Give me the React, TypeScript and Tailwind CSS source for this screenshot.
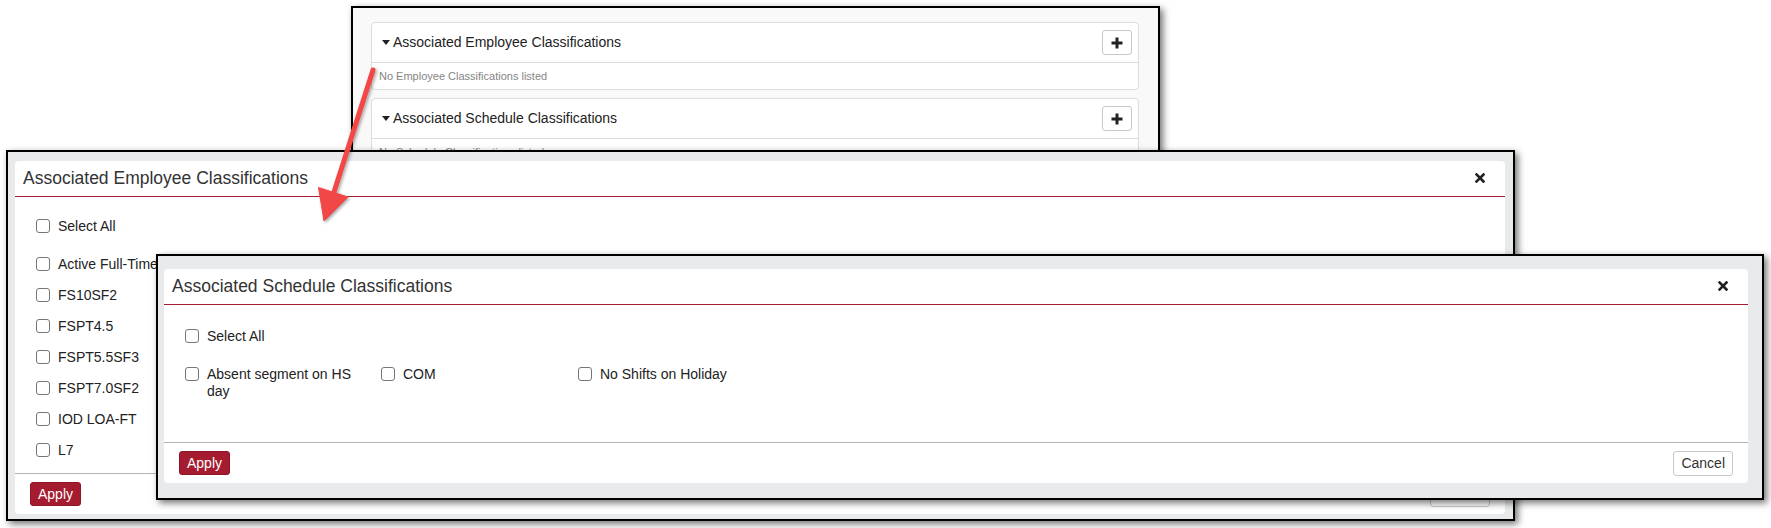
import { ReactNode } from "react";

const Checkbox = () => (
  <span className="mt-[1px] inline-block size-[14px] shrink-0 rounded-[3px] border border-[#767676] bg-white" />
);

const CloseIcon = () => (
  <svg width="10" height="10" viewBox="0 0 10 10" className="text-[#222]">
    <path d="M1.5 1.5 L8.5 8.5 M8.5 1.5 L1.5 8.5" stroke="currentColor" strokeWidth="2.6" strokeLinecap="square" />
  </svg>
);

const PlusIcon = () => (
  <svg width="12" height="12" viewBox="0 0 12 12" className="text-[#222]">
    <path d="M6 0.5 V11.5 M0.5 6 H11.5" stroke="currentColor" strokeWidth="3" />
  </svg>
);

const Caret = () => (
  <svg width="8" height="5" viewBox="0 0 8 5" className="mr-[3px] text-[#222]">
    <path d="M0 0 H8 L4 5 Z" fill="currentColor" />
  </svg>
);

const ApplyButton = () => (
  <button className="h-[24px] rounded-[3px] border border-[#8c1528] bg-[#a51c30] px-[7px] text-[14px] leading-none text-white">
    Apply
  </button>
);

const CancelButton = () => (
  <button className="h-[25px] rounded-[3px] border border-[#c8c8c8] bg-white px-[7px] text-[14px] leading-none text-[#333]">
    Cancel
  </button>
);

interface PanelProps {
  title: string;
  empty: string;
  className?: string;
}

const ClassificationPanel = ({ title, empty, className }: PanelProps) => (
  <div className={`rounded-[4px] border border-[#dcdcdc] bg-white ${className ?? ""}`}>
    <div className="flex h-[40px] items-center justify-between border-b border-[#dcdcdc] pl-[10px] pr-[6px]">
      <div className="flex items-center text-[14px] text-[#222]">
        <Caret />
        {title}
      </div>
      <button className="flex h-[25px] w-[30px] items-center justify-center rounded-[3px] border border-[#c8c8c8] bg-white">
        <PlusIcon />
      </button>
    </div>
    <div className="flex h-[26px] items-center pl-[7px] text-[11px] text-[#858585]">{empty}</div>
  </div>
);

interface DialogProps {
  title: string;
  children: ReactNode;
  className: string;
  frame: string;
  bodyPad: string;
}

const Dialog = ({ title, children, className, frame, bodyPad }: DialogProps) => (
  <div
    className={`absolute border-2 border-black bg-[#e9eaec] shadow-[3px_3px_7px_rgba(0,0,0,0.55)] ${className} ${frame}`}
  >
    <div className="flex h-full flex-col rounded-[4px] bg-white">
      <div className="flex h-[36px] shrink-0 items-center justify-between border-b border-[#a51c30] pb-[1px] pl-[8px] pr-[20px]">
        <span className="text-[17.5px] text-[#333]">{title}</span>
        <CloseIcon />
      </div>
      <div className={`flex-1 pl-[21px] ${bodyPad}`}>{children}</div>
      <div className="flex h-[41px] shrink-0 items-center justify-between border-t border-[#b4b4b4] px-[15px]">
        <ApplyButton />
        <CancelButton />
      </div>
    </div>
  </div>
);

const Item = ({ label, className }: { label: string; className?: string }) => (
  <div className={`flex items-start gap-[8px] ${className ?? ""}`}>
    <Checkbox />
    <span className="text-[14px] leading-[17px] text-[#222]">{label}</span>
  </div>
);

const employeeItems = ["FS10SF2", "FSPT4.5", "FSPT5.5SF3", "FSPT7.0SF2", "IOD LOA-FT", "L7"];

export default function App() {
  return (
    <div className="relative h-[528px] w-[1771px] overflow-hidden bg-white font-['Liberation_Sans',Arial,sans-serif]">
      {/* page behind */}
      <div className="absolute left-[351px] top-[6px] h-[160px] w-[809px] border-2 border-black bg-[#f9f9f9] pl-[18px] pr-[19px] pt-[14px] shadow-[3px_3px_7px_rgba(0,0,0,0.55)]">
        <ClassificationPanel title="Associated Employee Classifications" empty="No Employee Classifications listed" />
        <ClassificationPanel
          title="Associated Schedule Classifications"
          empty="No Schedule Classifications listed"
          className="mt-[8px]"
        />
      </div>

      <Dialog
        title="Associated Employee Classifications"
        className="left-[6px] top-[150px] h-[371px] w-[1509px]"
        frame="pb-[5px] pl-[7px] pr-[8px] pt-[9px]"
        bodyPad="pt-[21px]"
      >
        <div className="flex flex-col">
          <Item label="Select All" className="h-[38px]" />
          <Item label="Active Full-Time" className="h-[31px]" />
          {employeeItems.map((label) => (
            <Item key={label} label={label} className="h-[31px]" />
          ))}
        </div>
      </Dialog>

      {/* arrow */}
      <svg className="pointer-events-none absolute left-0 top-0" width="1771" height="528">
        <defs>
          <filter id="arrowShadow" x="-20%" y="-20%" width="140%" height="140%">
            <feDropShadow dx="1.5" dy="1.5" stdDeviation="1.5" floodColor="#000" floodOpacity="0.35" />
          </filter>
        </defs>
        <g filter="url(#arrowShadow)" fill="#f24747" stroke="#f24747">
          <line x1="373" y1="70" x2="334" y2="192" strokeWidth="5" strokeLinecap="round" />
          <polygon points="324,221 318.5,187.5 348,197" strokeWidth="1" strokeLinejoin="round" />
        </g>
      </svg>

      <Dialog
        title="Associated Schedule Classifications"
        className="left-[156px] top-[254px] h-[246px] w-[1608px]"
        frame="pb-[15px] pl-[6px] pr-[14px] pt-[13px]"
        bodyPad="pt-[23px]"
      >
        <Item label="Select All" className="h-[38px] gap-[7px]" />
        <div className="grid grid-cols-[196px_197px_196px]">
          <Item label="Absent segment on HS day" className="gap-[7px] pr-[20px]" />
          <Item label="COM" className="gap-[7px]" />
          <Item label="No Shifts on Holiday" className="gap-[7px]" />
        </div>
      </Dialog>
    </div>
  );
}
